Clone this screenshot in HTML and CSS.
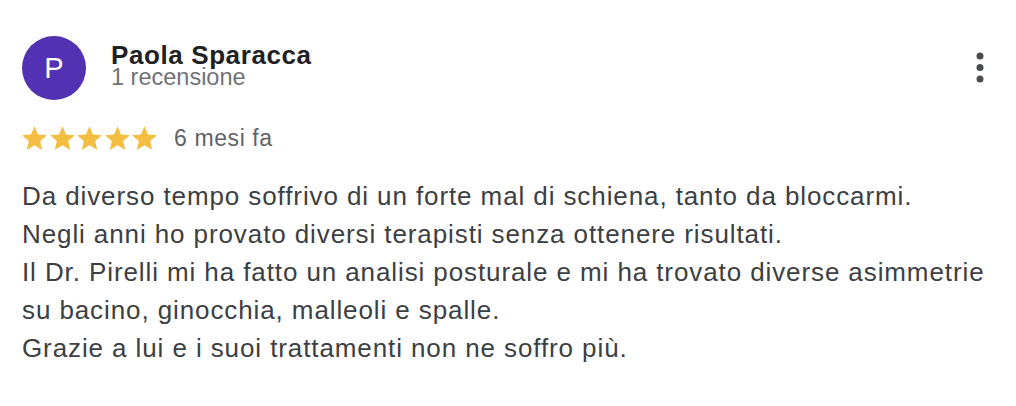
FILE: index.html
```html
<!DOCTYPE html>
<html>
<head>
    <meta charset="utf-8">
    <meta name="viewport" content="width=device-width, initial-scale=1.0">
    <title>Recensione</title>
    <link rel="stylesheet" href="styles.css">
</head>
<body>
    <div class="review">
        <div class="review-header">
            <div class="avatar">P</div>
            <div class="author">
                <div class="author-name">Paola Sparacca</div>
                <div class="author-meta">1 recensione</div>
            </div>
            <button class="menu" aria-label="Altre opzioni">
                <svg width="8" height="31" viewBox="0 0 8 31">
                    <circle cx="4" cy="4" r="3.5"/>
                    <circle cx="4" cy="15.5" r="3.5"/>
                    <circle cx="4" cy="27" r="3.5"/>
                </svg>
            </button>
        </div>
        <div class="rating">
            <div class="stars">
                <svg class="star" viewBox="2 2 20 19"><path d="M12 17.27L18.18 21l-1.64-7.03L22 9.24l-7.19-.61L12 2 9.19 8.63 2 9.24l5.46 4.73L5.82 21z"/></svg>
                <svg class="star" viewBox="2 2 20 19"><path d="M12 17.27L18.18 21l-1.64-7.03L22 9.24l-7.19-.61L12 2 9.19 8.63 2 9.24l5.46 4.73L5.82 21z"/></svg>
                <svg class="star" viewBox="2 2 20 19"><path d="M12 17.27L18.18 21l-1.64-7.03L22 9.24l-7.19-.61L12 2 9.19 8.63 2 9.24l5.46 4.73L5.82 21z"/></svg>
                <svg class="star" viewBox="2 2 20 19"><path d="M12 17.27L18.18 21l-1.64-7.03L22 9.24l-7.19-.61L12 2 9.19 8.63 2 9.24l5.46 4.73L5.82 21z"/></svg>
                <svg class="star" viewBox="2 2 20 19"><path d="M12 17.27L18.18 21l-1.64-7.03L22 9.24l-7.19-.61L12 2 9.19 8.63 2 9.24l5.46 4.73L5.82 21z"/></svg>
            </div>
            <span class="date">6 mesi fa</span>
        </div>
        <p class="review-text">
            Da diverso tempo soffrivo di un forte mal di schiena, tanto da bloccarmi.<br>
            Negli anni ho provato diversi terapisti senza ottenere risultati.<br>
            Il Dr. Pirelli mi ha fatto un analisi posturale e mi ha trovato diverse asimmetrie su bacino, ginocchia, malleoli e spalle.<br>
            Grazie a lui e i suoi trattamenti non ne soffro più.
        </p>
    </div>
</body>
</html>
```

FILE: styles.css
```css
* {
    box-sizing: border-box;
    margin: 0;
    padding: 0;
}
body {
    font-family: "Liberation Sans", Arial, sans-serif;
    background: white;
    color: #3c4043;
    padding: 36px 0 0 22px;
}
.review-header {
    display: flex;
    align-items: flex-start;
}
.avatar {
    width: 64px;
    height: 64px;
    border-radius: 50%;
    background: #5232b2;
    color: white;
    font-size: 29px;
    display: flex;
    align-items: center;
    justify-content: center;
    flex-shrink: 0;
}
.author {
    margin-left: 25px;
    padding-top: 7px;
}
.author-name {
    font-size: 26px;
    line-height: 24px;
    font-weight: bold;
    letter-spacing: 0.6px;
    color: #202124;
}
.author-meta {
    font-size: 23.5px;
    line-height: 20px;
    color: #6f7378;
}
.menu {
    margin-left: auto;
    margin-top: 16px;
    margin-right: 32px;
    background: none;
    border: none;
    display: flex;
    fill: #4a4d50;
}
.rating {
    display: flex;
    align-items: center;
    height: 24px;
    margin-top: 26px;
}
.stars {
    display: flex;
    gap: 2.5px;
}
.star {
    width: 25px;
    height: 24px;
    fill: #f4be43;
}
.date {
    font-size: 23px;
    line-height: 24px;
    letter-spacing: 0.6px;
    margin-left: 17px;
    color: #5f6368;
}
.review-text {
    margin-top: 27px;
    font-size: 26px;
    line-height: 38px;
    letter-spacing: 0.9px;
    color: #3c4043;
}
```
